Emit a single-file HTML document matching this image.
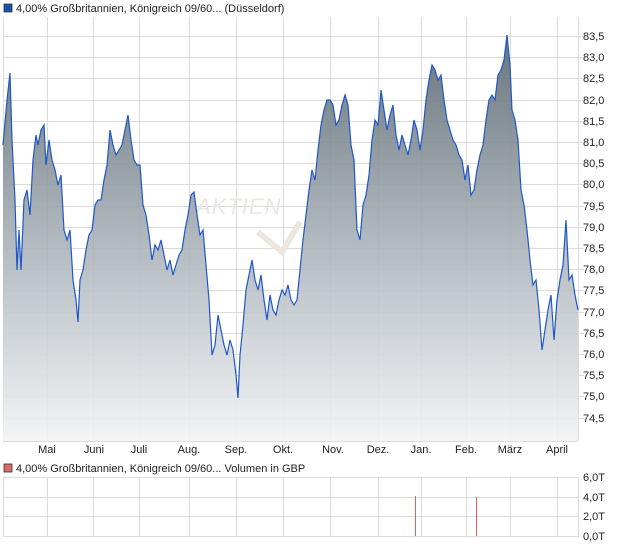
<!DOCTYPE html>
<html><head><meta charset="utf-8"><style>
body{margin:0;width:620px;height:546px;background:#fff;overflow:hidden;font-family:"Liberation Sans",sans-serif}
svg text{font-family:"Liberation Sans",sans-serif;font-size:11px;fill:#222}
</style></head><body>
<svg width="620" height="546" xmlns="http://www.w3.org/2000/svg">
<defs>
<linearGradient id="g" gradientUnits="userSpaceOnUse" x1="0" y1="30" x2="0" y2="441">
<stop offset="0" stop-color="#56646d"/><stop offset="0.5" stop-color="#a7b0b6"/><stop offset="1" stop-color="#f2f3f5"/>
</linearGradient>
</defs>
<rect x="4" y="4" width="8" height="8" fill="#1d4fb3" stroke="#333" stroke-width="0.8"/>
<text x="16" y="12">4,00% Großbritannien, Königreich 09/60... (Düsseldorf)</text>
<g stroke="#dcdcdc" stroke-width="1">
<path d="M3.5 17V441M47.5 17V441M93.5 17V441M139.5 17V441M189.5 17V441M236.5 17V441M283.5 17V441M330.5 17V441M378.5 17V441M421.5 17V441M466.5 17V441M510.5 17V441M557.5 17V441M578.5 17V441M3 441.5H578"/>
<path d="M3 36.5H584M3 57.5H584M3 78.5H584M3 100.5H584M3 121.5H584M3 142.5H584M3 163.5H584M3 184.5H584M3 206.5H584M3 227.5H584M3 248.5H584M3 269.5H584M3 290.5H584M3 312.5H584M3 333.5H584M3 354.5H584M3 375.5H584M3 396.5H584M3 418.5H584"/>
</g>
<text x="196" y="214" style="font-size:22px;font-style:italic;fill:#ece6e0;letter-spacing:1px">AKTIEN</text>
<path d="M258 232L282 252L300 222" stroke="#ece6e0" stroke-width="6" fill="none"/>
<path id="p" d="M3,145 L7,100 10,73 12,140 15,200 17,270 19,230 21,270 24,200 27,190 30,215 33,160 36,135 38,145 41,130 44,125 46,165 49,140 52,160 55,170 58,185 61,175 64,230 67,240 70,230 73,280 76,300 78,322 80,280 83,270 86,250 89,235 92,230 95,205 98,200 101,200 104,180 107,165 110,130 113,145 116,155 119,150 122,145 125,130 128,115 131,140 134,160 137,165 140,165 143,205 146,215 149,235 152,260 155,245 158,250 161,240 164,255 167,270 170,260 173,275 176,265 179,255 182,250 185,230 188,215 191,195 194,192 197,215 200,235 203,230 206,265 209,300 212,355 215,345 218,315 221,330 224,345 227,355 230,340 233,350 236,375 238,398 240,355 243,325 246,290 249,275 252,260 255,280 258,290 261,275 264,300 267,320 270,295 273,310 276,315 279,300 282,290 285,295 288,285 291,300 294,305 297,300 300,270 303,240 306,215 309,190 312,170 315,180 318,150 321,125 324,110 327,100 330,100 333,105 336,125 339,120 342,105 345,95 348,105 351,145 354,160 357,230 360,240 363,205 366,195 369,175 372,140 375,120 378,125 381,90 384,110 387,130 390,115 393,105 396,135 399,150 402,135 405,145 408,155 411,140 414,120 417,130 420,150 423,130 426,100 429,80 432,65 435,70 438,80 441,75 444,100 447,120 450,130 453,140 456,145 459,155 462,160 465,180 468,165 471,195 474,190 477,170 480,155 483,145 486,120 489,100 492,95 495,100 498,75 501,70 504,60 507,35 510,65 512,110 515,120 518,140 521,190 524,205 527,230 530,260 533,285 536,280 539,310 542,350 545,330 548,310 551,295 554,340 557,300 560,280 563,265 566,220 569,280 572,275 575,295 578,310" fill="none"/>
<path d="M3,441 L3,145 7,100 10,73 12,140 15,200 17,270 19,230 21,270 24,200 27,190 30,215 33,160 36,135 38,145 41,130 44,125 46,165 49,140 52,160 55,170 58,185 61,175 64,230 67,240 70,230 73,280 76,300 78,322 80,280 83,270 86,250 89,235 92,230 95,205 98,200 101,200 104,180 107,165 110,130 113,145 116,155 119,150 122,145 125,130 128,115 131,140 134,160 137,165 140,165 143,205 146,215 149,235 152,260 155,245 158,250 161,240 164,255 167,270 170,260 173,275 176,265 179,255 182,250 185,230 188,215 191,195 194,192 197,215 200,235 203,230 206,265 209,300 212,355 215,345 218,315 221,330 224,345 227,355 230,340 233,350 236,375 238,398 240,355 243,325 246,290 249,275 252,260 255,280 258,290 261,275 264,300 267,320 270,295 273,310 276,315 279,300 282,290 285,295 288,285 291,300 294,305 297,300 300,270 303,240 306,215 309,190 312,170 315,180 318,150 321,125 324,110 327,100 330,100 333,105 336,125 339,120 342,105 345,95 348,105 351,145 354,160 357,230 360,240 363,205 366,195 369,175 372,140 375,120 378,125 381,90 384,110 387,130 390,115 393,105 396,135 399,150 402,135 405,145 408,155 411,140 414,120 417,130 420,150 423,130 426,100 429,80 432,65 435,70 438,80 441,75 444,100 447,120 450,130 453,140 456,145 459,155 462,160 465,180 468,165 471,195 474,190 477,170 480,155 483,145 486,120 489,100 492,95 495,100 498,75 501,70 504,60 507,35 510,65 512,110 515,120 518,140 521,190 524,205 527,230 530,260 533,285 536,280 539,310 542,350 545,330 548,310 551,295 554,340 557,300 560,280 563,265 566,220 569,280 572,275 575,295 578,310 L578,441Z" fill="url(#g)" fill-opacity="0.9"/>
<use href="#p" stroke="#1f57c8" stroke-width="1.2"/>
<g>
<text x="583" y="40">83,5</text><text x="583" y="61">83,0</text><text x="583" y="82">82,5</text><text x="583" y="104">82,0</text><text x="583" y="125">81,5</text><text x="583" y="146">81,0</text><text x="583" y="167">80,5</text><text x="583" y="188">80,0</text><text x="583" y="210">79,5</text><text x="583" y="231">79,0</text><text x="583" y="252">78,5</text><text x="583" y="273">78,0</text><text x="583" y="294">77,5</text><text x="583" y="316">77,0</text><text x="583" y="337">76,5</text><text x="583" y="358">76,0</text><text x="583" y="379">75,5</text><text x="583" y="400">75,0</text><text x="583" y="422">74,5</text>
</g>
<g text-anchor="middle">
<text x="47" y="453">Mai</text><text x="94" y="453">Juni</text><text x="139" y="453">Juli</text><text x="189" y="453">Aug.</text><text x="236" y="453">Sep.</text><text x="283" y="453">Okt.</text><text x="333" y="453">Nov.</text><text x="378" y="453">Dez.</text><text x="421" y="453">Jan.</text><text x="466" y="453">Feb.</text><text x="510" y="453">März</text><text x="557" y="453">April</text>
</g>
<rect x="4" y="464" width="8" height="8" fill="#d96b6b" stroke="#333" stroke-width="0.8"/>
<text x="16" y="472">4,00% Großbritannien, Königreich 09/60... Volumen in GBP</text>
<g stroke="#dcdcdc" stroke-width="1">
<path d="M3 477.5H578M3 497.5H578M3 516.5H578M3 536.5H578M3.5 477V537M47.5 477V537M93.5 477V537M139.5 477V537M189.5 477V537M236.5 477V537M283.5 477V537M330.5 477V537M378.5 477V537M421.5 477V537M466.5 477V537M510.5 477V537M557.5 477V537M578.5 477V537"/>
</g>
<path d="M415.5 496V536M476.5 497V536" stroke="#e06060" stroke-width="1"/>
<text x="583" y="481">6,0T</text><text x="583" y="501">4,0T</text><text x="583" y="520">2,0T</text><text x="583" y="540">0,0T</text>
</svg>
</body></html>
